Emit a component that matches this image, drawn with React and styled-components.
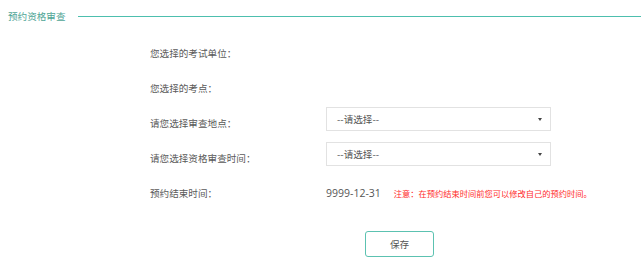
import styled, { createGlobalStyle } from 'styled-components';

const GlobalStyle = createGlobalStyle`
  html, body {
    margin: 0;
    padding: 0;
    background: #ffffff;
  }

  body {
    font-family: "Noto Sans CJK SC", "Open Sans", sans-serif;
    color: #555555;
  }
`;

const Panel = styled.div`
  width: 641px;
  height: 269px;
  overflow: hidden;
`;

const Legend = styled.div`
  display: flex;
  align-items: center;
  height: 32px;
  padding-left: 8px;

  span {
    font-size: 9.6px;
    color: #4fa596;
    line-height: 16px;
  }

  i {
    flex: 1;
    height: 1px;
    margin-left: 12px;
    background: #4dbfae;
  }
`;

const Form = styled.div`
  display: flex;
  flex-direction: column;
  gap: 11px;
  padding: 5px 0 0 150px;
`;

const Row = styled.div`
  display: flex;
  align-items: flex-end;
  height: 24px;
`;

const Label = styled.div`
  width: 176px;
  font-size: 9.6px;
  line-height: 16px;
  color: #5a5a5a;
`;

const Select = styled.div`
  display: flex;
  align-items: center;
  justify-content: space-between;
  box-sizing: border-box;
  width: 225px;
  height: 24px;
  padding: 0 8px 0 10px;
  border: 1px solid #e2e2e2;
  font-size: 9.6px;
  color: #555555;

  &::after {
    content: '';
    border-left: 2.5px solid transparent;
    border-right: 2.5px solid transparent;
    border-top: 3.5px solid #444444;
  }
`;

const DateText = styled.span`
  font-family: "Open Sans", sans-serif;
  font-size: 10.5px;
  line-height: 16px;
  color: #555555;
`;

const Note = styled.span`
  margin-left: 13px;
  font-size: 8.25px;
  line-height: 16px;
  color: #ff2a2a;
`;

const Actions = styled.div`
  display: flex;
  padding: 30px 0 0 365px;
`;

const SaveButton = styled.button`
  width: 69px;
  height: 26px;
  border: 1px solid #5cc2b1;
  border-radius: 3px;
  background: #ffffff;
  font-family: "Noto Sans CJK SC", sans-serif;
  font-size: 9.6px;
  color: #555555;
  cursor: pointer;
`;

export default function App() {
  return (
    <Panel>
      <GlobalStyle />
      <Legend>
        <span>预约资格审查</span>
        <i />
      </Legend>
      <Form>
        <Row>
          <Label>您选择的考试单位：</Label>
        </Row>
        <Row>
          <Label>您选择的考点：</Label>
        </Row>
        <Row>
          <Label>请您选择审查地点：</Label>
          <Select>--请选择--</Select>
        </Row>
        <Row>
          <Label>请您选择资格审查时间：</Label>
          <Select>--请选择--</Select>
        </Row>
        <Row>
          <Label>预约结束时间：</Label>
          <DateText>9999-12-31</DateText>
          <Note>注意：在预约结束时间前您可以修改自己的预约时间。</Note>
        </Row>
      </Form>
      <Actions>
        <SaveButton>保存</SaveButton>
      </Actions>
    </Panel>
  );
}
